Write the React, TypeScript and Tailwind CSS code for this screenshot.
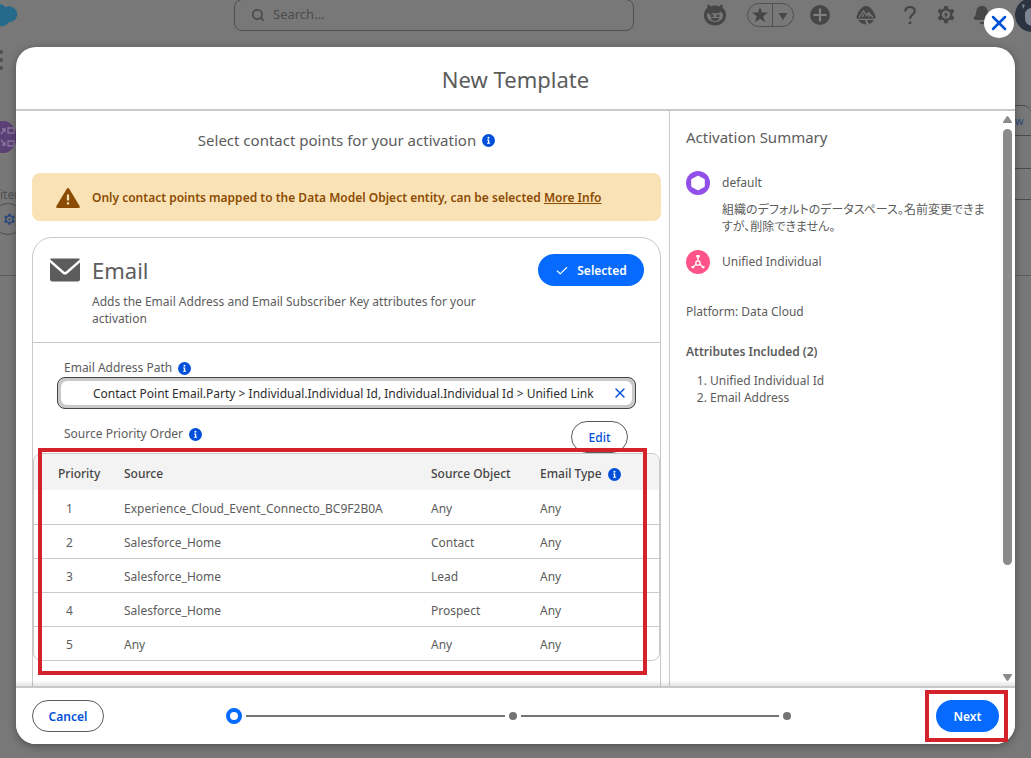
import { Bell, Check, Search, X } from "lucide-react";
import type { ReactNode } from "react";

type SourceRow = {
  source: string;
  object: string;
  type: string;
};

const rows: SourceRow[] = [
  { source: "Experience_Cloud_Event_Connecto_BC9F2B0A", object: "Any", type: "Any" },
  { source: "Salesforce_Home", object: "Contact", type: "Any" },
  { source: "Salesforce_Home", object: "Lead", type: "Any" },
  { source: "Salesforce_Home", object: "Prospect", type: "Any" },
  { source: "Any", object: "Any", type: "Any" },
];

function InfoIcon() {
  return (
    <svg viewBox="0 0 14 14" className="size-[13px] shrink-0" aria-hidden="true">
      <circle cx="7" cy="7" r="7" fill="#0250d9" />
      <circle cx="7" cy="4" r="1.1" fill="#fff" />
      <path d="M5.4 6h2.4v3.4h1v1.1H5.4V9.400h1V7.100h-1z" fill="#fff" />
    </svg>
  );
}

function GearIcon({ className }: { className: string }) {
  return (
    <svg viewBox="0 0 20 20" className={className} fill="none" aria-hidden="true">
      <path
        d="M8.300 1h3.400l.5 2.600 1.900 1.100 2.500-.9 1.700 2.900-2 1.800v2.200l2 1.800-1.700 2.900-2.500-.9-1.900 1.100-.5 2.600H8.300l-.5-2.600-1.900-1.100-2.500.9-1.700-2.900 2-1.800V8.500l-2-1.800 1.700-2.900 2.500.9 1.900-1.100z"
        fill="currentColor"
      />
      <circle cx="10" cy="9.600" r="4.200" fill="#787878" />
      <path d="M10.800 6.200 7.600 10.200h2l-.7 3 3.400-4.100h-2.100z" fill="currentColor" />
    </svg>
  );
}

// 上部ツールバーのアイコン
function ToolbarIcons() {
  return (
    <div className="flex h-[30px] items-center text-[#464646]">
      <svg viewBox="0 0 24 24" className="mr-5 size-6" aria-hidden="true">
        <path
          d="M4 1.500c1.500-.3 3 .4 3.500 1.900a12 12 0 0 1 9 0c.5-1.500 2-2.200 3.500-1.900-.7.900-.8 2-.3 3.200 2 1.600 3.300 4.300 3.300 7.300 0 6-4.700 10.500-11 10.500S1 18 1 12c0-3 1.300-5.700 3.300-7.300.5-1.200.4-2.300-.3-3.200z"
          fill="currentColor"
        />
        <path
          d="M4 12.500c0-3 3-5 8-5s8 2 8 5-3 6.500-8 6.500-8-3.500-8-6.500z"
          fill="#787878"
        />
        <path d="M5 9.500q3-3 8-2.500l5.500-.5-1.500 3-4 1-3-.5-3.500 2zM7.500 11.500h3v2.500h-3zM13.500 11.500h3v2.500h-3zM7.500 15h9q-1 3-4.500 3t-4.500-3z" fill="currentColor" />
      </svg>
      <div className="mr-4 flex h-6 w-[47px] items-center rounded-full border border-[#505050]">
        <svg viewBox="0 0 20 20" className="ml-1 size-4 shrink-0" aria-hidden="true">
          <path d="m10 0 2.600 7H20l-5.900 4.600 2.200 7.600L10 14.700l-6.300 4.500 2.200-7.600L0 7h7.400z" fill="currentColor" />
        </svg>
        <span className="ml-1 h-full w-px bg-[#505050]" />
        <svg viewBox="0 0 10 8" className="mt-0.5 ml-[5px] h-[7px] w-[10px]" aria-hidden="true">
          <path d="M0 0h10L5 8z" fill="currentColor" />
        </svg>
      </div>
      <svg viewBox="0 0 20 20" className="mr-[26px] size-5" aria-hidden="true">
        <circle cx="10" cy="10" r="10" fill="currentColor" />
        <path d="M10 3.500v13M3.500 10h13" stroke="#808080" strokeWidth="2.200" />
      </svg>
      <svg viewBox="0 0 20 20" className="mr-7 size-5" aria-hidden="true">
        <path d="M6 2.500Q10-.8 14 2.500q4 3.500 5.500 9.500.3 1.700-1.500 1.700H2Q.2 13.700.5 12 2 6 6 2.500z" fill="currentColor" />
        <path d="m3 12.500 4.500-6.500 3 4.500 2-3 4.500 5M7.500 9l-1 3M12.500 9l1 3" stroke="#787878" strokeWidth="1.300" fill="none" />
        <path d="M2 15h7l1.500 4.500Q4.500 19 2 15zM11 15h7q-2 3-5 4z" fill="currentColor" />
      </svg>
      <svg viewBox="0 0 12 20" className="mr-5 h-5 w-3" fill="none" aria-hidden="true">
        <path d="M1.300 6.500C1.300 3.500 3.300 2 6 2s4.700 1.600 4.700 4.200C10.700 9.500 6 10 6 13.800" stroke="currentColor" strokeWidth="2.200" />
        <circle cx="6" cy="17.800" r="1.500" fill="currentColor" />
      </svg>
      <GearIcon className="mr-4 size-5" />
      <Bell className="mr-[23px] size-5 fill-current" />
      <svg viewBox="0 0 34 34" className="-mr-[18px] size-[34px]" aria-hidden="true">
        <circle cx="17" cy="17" r="17" fill="#2c3442" />
        <path d="M10 15q2-5 7-5v18q-7-1-7-8zM7 6l3 1-2 4z" fill="#7d8590" />
      </svg>
    </div>
  );
}

function BackgroundPage() {
  return (
    <div className="absolute inset-0 overflow-hidden bg-[#787878]" aria-hidden="true">
      <div className="flex h-[30px] items-center justify-between">
        <svg viewBox="0 0 18 26" className="h-[26px] w-[18px]" aria-hidden="true">
          <path d="M0 2q3 0 5 3 5-2 9 1 4 3 3 8-2 6-8 6-3 5-9 4z" fill="#256a8a" />
        </svg>
        <div className="ml-[216px] flex h-8 w-[400px] shrink-0 items-center gap-2 rounded-lg border border-[#505050] pl-4 text-[13px] text-[#4c4c4c]">
          <Search className="size-[14px]" strokeWidth={3} />
          <span>Search...</span>
        </div>
        <div className="ml-auto">
          <ToolbarIcons />
        </div>
      </div>
      <div className="flex justify-between">
        <div className="w-4 pt-5">
          <div className="flex flex-col gap-1">
            <i className="h-1 w-[3px] rounded-r-full bg-[#505050]" />
            <i className="h-1 w-[3px] rounded-r-full bg-[#505050]" />
            <i className="h-1 w-[3px] rounded-r-full bg-[#505050]" />
          </div>
          <svg viewBox="0 0 16 32" className="mt-[51px] h-8 w-4" fill="none">
            <circle cx="0" cy="16" r="17" fill="#5c4177" />
            <path d="M8 7h6v5H8zM8 20h6v5H8zM1 13l4-5M1 19l4 5M2 8h3v3M2 24h3v-3" stroke="#8a78a0" strokeWidth="1.300" />
          </svg>
          <p className="mt-[34px] text-xs leading-4 text-[#505050]">iter</p>
          <div className="-ml-2 flex h-8 w-8 items-center rounded-full border border-[#505050] pl-[10px] text-[#2b4a7c]">
            <GearIcon className="size-[13px]" />
          </div>
          <div className="mt-10 h-px bg-[#5c5c5c]" />
        </div>
        <div className="w-4 pt-[75px]">
          <div className="h-[31px] overflow-hidden rounded-tr-lg border-y border-[#4a4a4a] text-[11px] leading-[30px] text-[#2b4a7c]">w</div>
          <div className="mt-8 h-8 border-y border-[#4a4a4a]" />
          <div className="mt-[75px] h-px bg-[#5c5c5c]" />
        </div>
      </div>
    </div>
  );
}

function WarningBanner() {
  return (
    <div className="flex h-12 items-center gap-3 rounded-lg bg-[#f9e3b6] px-6 pt-0.5 text-xs font-semibold text-[#8c4b02]">
      <svg viewBox="0 0 24 20" className="h-5 w-6 shrink-0" aria-hidden="true">
        <path d="M10.800.700q1.200-1.400 2.400 0l10.500 17.500q.6 1.800-1.200 1.800h-21Q-.3 20 .300 18.200z" fill="#8c4b02" />
        <path d="M10.900 6.500h2.200v6h-2.200zM10.900 14.300h2.200v2.200h-2.200z" fill="#f9e3b6" />
      </svg>
      <p>
        Only contact points mapped to the Data Model Object entity, can be selected{" "}
        <a href="#more-info" className="underline">
          More Info
        </a>
      </p>
    </div>
  );
}

function SourceTable() {
  return (
    <div className="relative">
      <div className="overflow-hidden rounded-lg border border-[#c9c9c9]">
        <table className="w-full table-fixed border-collapse text-left">
          <colgroup>
            <col className="w-[82px]" />
            <col />
            <col className="w-[109px]" />
            <col className="w-[127px]" />
          </colgroup>
          <thead className="bg-[#f3f3f3] text-[#444]">
            <tr className="h-9">
              <th className="pt-1 pl-6 font-medium">Priority</th>
              <th className="px-2 pt-1 font-medium">Source</th>
              <th className="pt-1 pl-2 font-medium">Source Object</th>
              <th className="pt-1 pl-2 font-medium">
                <span className="flex items-center gap-1.5">
                  Email Type <InfoIcon />
                </span>
              </th>
            </tr>
          </thead>
          <tbody>
            {rows.map((row, i) => (
              <tr key={i} className="h-[34px] border-b border-[#c9c9c9] last:border-b-0">
                <td className="pt-1 pl-8">{i + 1}</td>
                <td className="px-2 pt-1">{row.source}</td>
                <td className="px-2 pt-1">{row.object}</td>
                <td className="px-2 pt-1">{row.type}</td>
              </tr>
            ))}
          </tbody>
        </table>
      </div>
      <div className="pointer-events-none absolute -top-[5px] -bottom-3.5 left-[5px] right-[13px] border-4 border-[#d4222c]" />
    </div>
  );
}

function EmailCard() {
  return (
    <section className="mt-4 h-[600px] rounded-t-[20px] border border-[#c9c9c9]">
      <div className="flex h-[105px] items-start border-b border-[#c9c9c9] pt-4 pr-4 pl-[17px]">
        <svg viewBox="0 0 30 24" className="mt-1 h-6 w-[30px] shrink-0 text-[#5c5c5c]" aria-hidden="true">
          <path d="M0 1.200Q.3.500 1.200.500h27.600q.9 0 1.200.7L16 13.500q-1 .8-2 0z" fill="currentColor" />
          <path d="M0 4.500 12.800 15.700q2.200 1.800 4.400 0L30 4.500V21q0 2.500-2.500 2.500h-25Q0 23.500 0 21z" fill="currentColor" />
        </svg>
        <div className="ml-3 flex-1">
          <h3 className="text-[22px] leading-8">Email</h3>
          <p className="mt-[7px] max-w-[410px] leading-[17px]">
            Adds the Email Address and Email Subscriber Key attributes for your activation
          </p>
        </div>
        <button className="flex h-8 w-[106px] shrink-0 items-center justify-center gap-2 rounded-full bg-[#066afe] pt-0.5 font-semibold text-white">
          <Check className="size-[14px]" />
          Selected
        </button>
      </div>

      <div className="px-6 pt-4">
        <label htmlFor="path" className="flex h-[18px] items-center gap-1.5 pl-[7px]">
          Email Address Path <InfoIcon />
        </label>
        <div className="flex h-8 items-center rounded-lg border border-[#444] bg-[#c9c9c9] p-[3px]">
          <div className="flex h-full flex-1 items-center rounded-md bg-white pr-1 pl-8">
            <input
              id="path"
              readOnly
              defaultValue="Contact Point Email.Party > Individual.Individual Id, Individual.Individual Id > Unified Link"
              className="min-w-0 flex-1 pt-0.5 text-[#2e2e2e] outline-none"
            />
            <button aria-label="Clear" className="text-[#0250d9]">
              <X className="size-4" />
            </button>
          </div>
        </div>
        <div className="mt-3 flex h-8 justify-between pr-2 pl-[7px]">
          <p className="flex h-[26px] items-center gap-1.5">
            Source Priority Order <InfoIcon />
          </p>
          <button className="h-8 w-[57px] rounded-full border border-[#5c5c5c] pt-0.5 font-medium text-[#0250d9]">
            Edit
          </button>
        </div>
      </div>
      <SourceTable />
    </section>
  );
}

function SummaryItem({ icon, title, children }: { icon: ReactNode; title: string; children?: ReactNode }) {
  return (
    <div className="flex gap-3">
      {icon}
      <div>
        <p className="leading-6">{title}</p>
        {children}
      </div>
    </div>
  );
}

function Summary() {
  return (
    <aside className="flex w-[346px] shrink-0 border-l border-[#c9c9c9]">
      <div className="flex-1 pt-3.5 pl-4">
        <h2 className="text-[15px] leading-6">Activation Summary</h2>
        <div className="mt-[22px]">
          <SummaryItem
            title="default"
            icon={
              <svg viewBox="0 0 24 24" className="size-6 shrink-0" aria-hidden="true">
                <circle cx="12" cy="12" r="12" fill="#9050e9" />
                <path d="M11.200 5q.8-.4 1.600 0l5.200 2.800q.8.500.8 1.400v5.600q0 .9-.8 1.400L12.800 19q-.8.400-1.600 0L6 16.200q-.8-.5-.8-1.400V9.200q0-.9.8-1.400z" fill="#fff" />
              </svg>
            }
          >
            <p className="mt-1.5 leading-[17px] whitespace-nowrap [font-feature-settings:'palt']">
              組織のデフォルトのデータスペース。名前変更できま
              <br />
              すが、削除できません。
            </p>
          </SummaryItem>
        </div>
        <div className="mt-[15px]">
          <SummaryItem
            title="Unified Individual"
            icon={
              <svg viewBox="0 0 24 24" className="size-6 shrink-0" fill="none" stroke="#fff" aria-hidden="true">
                <circle cx="12" cy="12" r="12" fill="#ff538a" stroke="none" />
                <circle cx="12" cy="13" r="2.200" strokeWidth="1.300" />
                <path d="M12 10.500V7M10 14.500l-3.500 2.700M14 14.500l3.500 2.700" strokeWidth="1.300" />
                <path d="M10.300 5h3.400v2.500h-3.400zM5 16.500l2.500-.5 1 2-2.300.5zM19 16.500l-2.500-.5-1 2 2.300.5z" fill="#fff" stroke="none" />
              </svg>
            }
          />
        </div>
        <p className="mt-[26px] leading-6">Platform: Data Cloud</p>
        <h3 className="mt-4 leading-6 font-semibold">Attributes Included (2)</h3>
        <ol className="mt-2 list-decimal pl-6 leading-[17px]">
          <li>Unified Individual Id</li>
          <li>Email Address</li>
        </ol>
      </div>
      {/* スクロールバー */}
      <div className="flex w-[15px] flex-col items-center py-[5px]">
        <svg viewBox="0 0 9 7" className="h-[7px] w-[9px]" aria-hidden="true">
          <path d="M3.500.700q1-1.200 2 0L9 6v1H0V6z" fill="#8b8b8b" />
        </svg>
        <div className="mt-1.5 flex-1">
          <div className="h-4/5 w-[9px] rounded-full bg-[#8b8b8b]" />
        </div>
        <svg viewBox="0 0 9 7" className="h-[7px] w-[9px]" aria-hidden="true">
          <path d="M3.500 6.300q1 1.200 2 0L9 1V0H0v1z" fill="#8b8b8b" />
        </svg>
      </div>
    </aside>
  );
}

// 進捗ステップの点
function StepDot() {
  return (
    <span className="flex size-4 items-center justify-center">
      <span className="size-2 rounded-full bg-[#747474]" />
    </span>
  );
}

function ModalFooter() {
  return (
    <footer className="relative flex h-[58px] shrink-0 items-center rounded-b-[20px] border-t-2 border-[#c9c9c9] bg-white px-4">
      <div className="pointer-events-none absolute inset-x-0 -top-2 h-1.5 bg-linear-to-t from-black/10 to-transparent" />
      <button className="h-8 w-[72px] rounded-full border border-[#5c5c5c] pt-0.5 font-semibold text-[#0250d9]">
        Cancel
      </button>
      <div className="mr-[141px] ml-[122px] flex flex-1 items-center">
        <span className="size-4 rounded-full border-4 border-[#066afe]" />
        <span className="flex-1 pl-1">
          <span className="block h-0.5 bg-[#747474]" />
        </span>
        <StepDot />
        <span className="h-0.5 flex-1 bg-[#747474]" />
        <StepDot />
      </div>
      <div className="relative">
        <button className="block h-8 w-[63px] rounded-full bg-[#066afe] pt-0.5 font-semibold text-white">Next</button>
        <div className="pointer-events-none absolute -inset-y-[10px] -right-[9px] -left-[11px] border-4 border-[#d4222c]" />
      </div>
    </footer>
  );
}

export default function App() {
  return (
    <div className="relative h-screen overflow-hidden font-['Noto_Sans','Noto_Sans_CJK_JP',sans-serif] text-xs text-[#5c5c5c]">
      <BackgroundPage />
      <div className="relative flex h-full flex-col px-4 pt-[47px] pb-3.5">
        <button
          aria-label="Close"
          className="absolute top-2 right-[17px] flex size-[30px] items-center justify-center rounded-full bg-white text-[#0250d9]"
        >
          <X className="size-6" strokeWidth={2.5} />
        </button>
        <div role="dialog" className="flex min-h-0 flex-1 flex-col rounded-[20px] bg-white shadow-[0_2px_8px_rgba(0,0,0,0.35)]">
          <header className="flex h-16 shrink-0 items-center justify-center border-b-2 border-[#c9c9c9] pt-1">
            <h1 className="text-[22px]">New Template</h1>
          </header>
          <div className="flex min-h-0 flex-1">
            <main className="min-w-0 flex-1 overflow-hidden pr-2 pl-4">
              <h2 className="flex items-center justify-center gap-1.5 pt-4 pb-5 text-[15px] leading-[26px]">
                Select contact points for your activation <InfoIcon />
              </h2>
              <WarningBanner />
              <EmailCard />
            </main>
            <Summary />
          </div>
          <ModalFooter />
        </div>
      </div>
    </div>
  );
}
